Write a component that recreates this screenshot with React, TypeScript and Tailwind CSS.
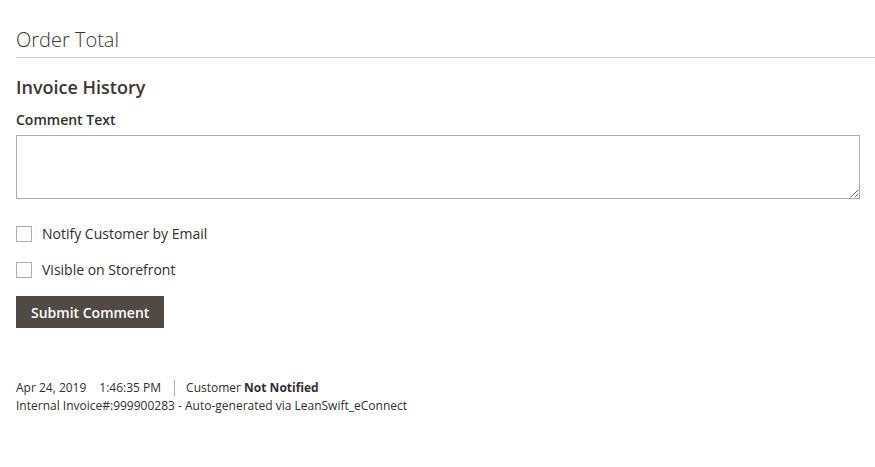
import React from "react";

function Checkbox({ label }: { label: string }) {
  return (
    <label className="flex items-center gap-[10px] text-[14px] text-[#303030]">
      <span className="h-4 w-4 border border-[#adadad] bg-white" />
      <span>{label}</span>
    </label>
  );
}

export default function App() {
  return (
    <div
      className="min-h-[467px] bg-white pl-4 pt-[26px]"
      style={{ fontFamily: '"Open Sans", "Liberation Sans", sans-serif' }}
    >
      <div className="border-b border-[#cccccc] pb-[3px]">
        <h2 className="text-[20px] font-light leading-[28px] text-[#41362f]">Order Total</h2>
      </div>

      <h3 className="mt-[17px] text-[18px] font-semibold leading-[24px] text-[#41362f]">Invoice History</h3>

      <div className="mt-[11px] text-[14px] font-semibold leading-[20px] text-[#303030]">Comment Text</div>
      <textarea className="mt-[5px] block h-[64px] w-[844px] border border-[#adadad] bg-white p-2 text-[14px] outline-none" />

      <div className="mt-[24px] flex flex-col gap-[15px]">
        <Checkbox label="Notify Customer by Email" />
        <Checkbox label="Visible on Storefront" />
      </div>

      <button className="mt-[16px] block h-[32px] bg-[#514943] px-[15px] text-[14px] font-semibold text-white">
        Submit Comment
      </button>

      <div className="mt-[51px] text-[12px] leading-[18px] text-[#303030]">
        <div className="flex items-center">
          <span>Apr 24, 2019</span>
          <span className="ml-[13px]">1:46:35 PM</span>
          <span className="ml-[13px] mr-[11px] h-[16px] w-px bg-[#adadad]" />
          <span>
            Customer <b className="font-bold">Not Notified</b>
          </span>
        </div>
        <div>Internal Invoice#:999900283 - Auto-generated via LeanSwift_eConnect</div>
      </div>
    </div>
  );
}
